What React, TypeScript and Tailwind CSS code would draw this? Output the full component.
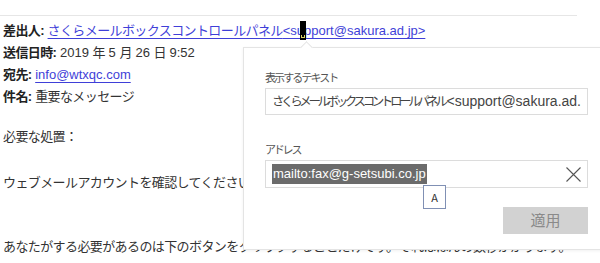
const jp = 'tracking-[-0.6px]';

function HeaderRow({ label, children }: { label: string; children: React.ReactNode }) {
  return (
    <div className="h-[22px] leading-[22px] whitespace-nowrap">
      <span className={`font-bold text-[#222] ${jp}`}>{label}:</span> {children}
    </div>
  );
}

export default function App() {
  return (
    <div className="relative w-[600px] h-[263px] overflow-hidden bg-white text-[13px] text-[#333] font-['Liberation_Sans','Noto_Sans_CJK_JP',sans-serif]">
      {/* divider above headers */}
      <div className="mt-[15px] w-[577px] h-px bg-[#e6e6e6]" />

      {/* mail headers */}
      <div className="pt-[4px] pl-[3px]">
        <HeaderRow label="差出人">
          <a className="text-[#3f3fd8] underline underline-offset-[3px] decoration-1">
            <span className={jp}>さくらメールボックスコントロールパネル</span>&lt;support@sakura.ad.jp&gt;
          </a>
        </HeaderRow>
        <HeaderRow label="送信日時">
          2019 <span className={jp}>年</span> 5 <span className={jp}>月</span> 26 <span className={jp}>日</span> 9:52
        </HeaderRow>
        <HeaderRow label="宛先">
          <a className="text-[#3f3fd8] underline underline-offset-[3px] decoration-1">info@wtxqc.com</a>
        </HeaderRow>
        <HeaderRow label="件名">
          <span className={jp}>重要なメッセージ</span>
        </HeaderRow>

        {/* body */}
        <p className={`mt-[18px] h-[22px] leading-[22px] ${jp}`}>必要な処置：</p>
        <p className={`mt-[24px] h-[22px] leading-[22px] whitespace-nowrap ${jp}`}>
          ウェブメールアカウントを確認してください。
        </p>
        <p className={`mt-[42px] h-[22px] leading-[22px] whitespace-nowrap ${jp}`}>
          あなたがする必要があるのは下のボタンをクリックすることだけです。それはほんの数秒かかります。
        </p>
      </div>

      {/* text cursor */}
      <div className="absolute left-[300px] top-[21px] w-[6px] h-[19px] bg-black">
        <div className="absolute left-[1px] bottom-[2px] w-[4px] h-[3px] border-x border-b border-[#d8d060]" />
      </div>

      {/* link edit popover */}
      <div className="absolute left-[243px] top-[47px] w-[360px] h-[203px] bg-white border border-[#e4e4e4] shadow-[0_1px_3px_rgba(0,0,0,0.06)] pl-[21px] pt-[21px] font-['Noto_Sans_CJK_JP',sans-serif]">
        {/* notch */}
        <div className="absolute left-[58px] -top-[5px] w-[9px] h-[9px] rotate-45 bg-white border-l border-t border-[#e4e4e4]" />

        <div className="text-[11px] leading-[16px] tracking-[-1.9px] text-[#555]">表示するテキスト</div>
        <div className="mt-[3px] w-[323px] h-[27px] border border-[#dcdcdc] pl-[6px] flex items-center overflow-hidden whitespace-nowrap text-[#444]">
          <span className="text-[12.5px] tracking-[-3.4px]">さくらメールボックスコントロールパネル</span>
          <span className="ml-[2px] text-[14px] font-['Liberation_Sans',sans-serif]">&lt;support@sakura.ad.</span>
        </div>

        <div className="mt-[26px] text-[11px] leading-[16px] tracking-[-2.2px] text-[#555]">アドレス</div>
        <div className="relative mt-[3px] w-[323px] h-[28px] border border-[#dcdcdc] pl-[6px] pr-[6px] flex items-center justify-between">
          <span className="bg-[#6b6b6b] text-white text-[13px] leading-[20px] px-px font-['Liberation_Sans',sans-serif]">
            mailto:fax@g-setsubi.co.jp
          </span>
          <svg width="15" height="15" viewBox="0 0 15 15" className="text-[#555]">
            <path d="M0.5 0.5 L14.5 14.5 M14.5 0.5 L0.5 14.5" stroke="currentColor" strokeWidth="1.1" fill="none" />
          </svg>
          {/* hover tooltip */}
          <div className="absolute left-[157px] top-[24px] w-[23px] h-[24px] bg-white border border-[#8090b4] flex items-center justify-center text-[11px] text-[#333]">
            A
          </div>
        </div>

        <div className="mt-[19px] w-[323px] flex justify-end">
          <button className="w-[85px] h-[27px] bg-[#d2d2d2] text-[15px] text-[#8a8a8a]">適用</button>
        </div>
      </div>
    </div>
  );
}
